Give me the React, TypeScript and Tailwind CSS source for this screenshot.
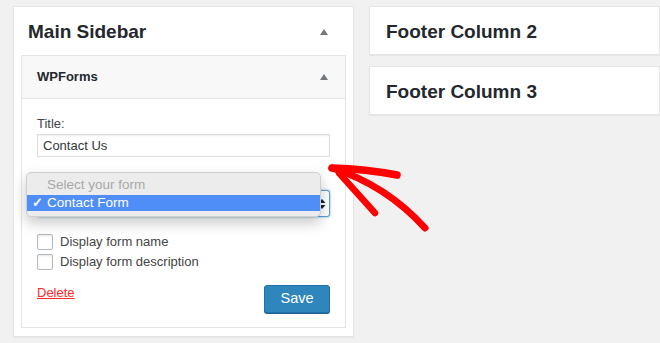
import React from 'react';

const font = { fontFamily: '"Liberation Sans", Arial, sans-serif' };

function Caret() {
  return <span className="h-0 w-0 border-x-[4px] border-b-[6px] border-x-transparent border-b-[#72777c]" />;
}

function Checkbox({ label }: { label: string }) {
  return (
    <label className="flex items-center gap-[7px] h-[16px] text-[13px] text-[#444]">
      <span className="w-[16px] h-[16px] border border-[#b4b9be] rounded-[2px] bg-white shadow-[inset_0_1px_2px_rgba(0,0,0,0.1)]" />
      {label}
    </label>
  );
}

function FormSelect() {
  return (
    <div className="relative mt-[33px] h-[27px]">
      <div className="h-full border border-[#5b9dd9] rounded-[3px] bg-white shadow-[0_0_2px_rgba(30,140,190,0.8)] flex items-center justify-end pr-[3px]">
        <svg width="8" height="12" viewBox="0 0 8 12">
          <path d="M4 1 L7.5 5 L0.5 5 Z" fill="#222" />
          <path d="M4 11 L7.5 7 L0.5 7 Z" fill="#222" />
        </svg>
      </div>

      {/* open native dropdown */}
      <div className="absolute -left-[11px] -top-[18px] w-[295px] h-[45px] rounded-[5px] bg-[#ececec] border border-[#cfcfcf] shadow-[0_6px_14px_rgba(0,0,0,0.22)] pt-[3px] pb-[6px] text-[13.5px]">
        <div className="h-[19px] pl-[20px] flex items-center text-[#a9a9a9]">Select your form</div>
        <div className="h-[16px] bg-[#4f8ef7] text-white flex items-center">
          <span className="w-[20px] pl-[5px] text-[13px] font-bold">✓</span>
          Contact Form
        </div>
      </div>
    </div>
  );
}

function SimplePanel({ title }: { title: string }) {
  return (
    <div className="h-[49px] border border-[#e5e5e5] bg-white shadow-[0_1px_1px_rgba(0,0,0,0.04)] flex items-center pl-[16px] pt-[3px]">
      <h2 className="text-[19px] font-bold text-[#23282d]">{title}</h2>
    </div>
  );
}

export default function App() {
  return (
    <div className="relative w-[660px] h-[343px] overflow-hidden bg-[#f1f1f1] flex gap-[15px] pt-[6px] pl-[13px]" style={font}>
      {/* Main sidebar */}
      <div className="w-[341px] h-[331px] shrink-0 border border-[#e5e5e5] bg-white shadow-[0_1px_1px_rgba(0,0,0,0.04)]">
        <div className="h-[48px] flex items-center justify-between pl-[14px] pr-[25px] pt-[2px]">
          <h2 className="text-[19px] font-bold text-[#23282d]">Main Sidebar</h2>
          <Caret />
        </div>

        <div className="mx-[7px] border border-[#e5e5e5]">
          <div className="h-[43px] bg-[#f8f8f8] border-b border-[#e5e5e5] flex items-center justify-between pl-[15px] pr-[17px]">
            <h3 className="text-[13px] font-bold text-[#23282d]">WPForms</h3>
            <Caret />
          </div>

          <div className="px-[15px] pt-[16px] pb-[14px] text-[#444]">
            <label className="block text-[13px] leading-[18px]">Title:</label>
            <div className="mt-[1px] h-[23px] border border-[#ddd] shadow-[inset_0_1px_2px_rgba(0,0,0,0.07)] flex items-center pl-[5px] text-[13px] text-[#32373c]">
              Contact Us
            </div>

            <FormSelect />

            <div className="mt-[17px] flex flex-col gap-[4px]">
              <Checkbox label="Display form name" />
              <Checkbox label="Display form description" />
            </div>

            <div className="mt-[15px] flex justify-between items-start">
              <a className="-mt-[1px] text-[13px] leading-[18px] text-[#ff2a2a] underline">Delete</a>
              <button className="w-[66px] h-[28px] rounded-[3px] bg-[#2e86bc] border border-[#2271a6] shadow-[0_1px_0_#1f6696] text-white text-[14.5px]">
                Save
              </button>
            </div>
          </div>
        </div>
      </div>

      {/* Footer columns */}
      <div className="flex-1 flex flex-col gap-[11px]">
        <SimplePanel title="Footer Column 2" />
        <SimplePanel title="Footer Column 3" />
      </div>

      {/* red hand-drawn arrow */}
      <svg className="absolute left-0 top-0 pointer-events-none" width="660" height="343" viewBox="0 0 660 343">
        <g stroke="#fe0000" strokeLinecap="round" fill="none">
          <path d="M332 168 Q 386 185 425 228" strokeWidth="7" />
          <path d="M332 168 Q 366 169 397 175" strokeWidth="7.5" />
          <path d="M339 173 L 375 213" strokeWidth="6.5" />
        </g>
      </svg>
    </div>
  );
}
